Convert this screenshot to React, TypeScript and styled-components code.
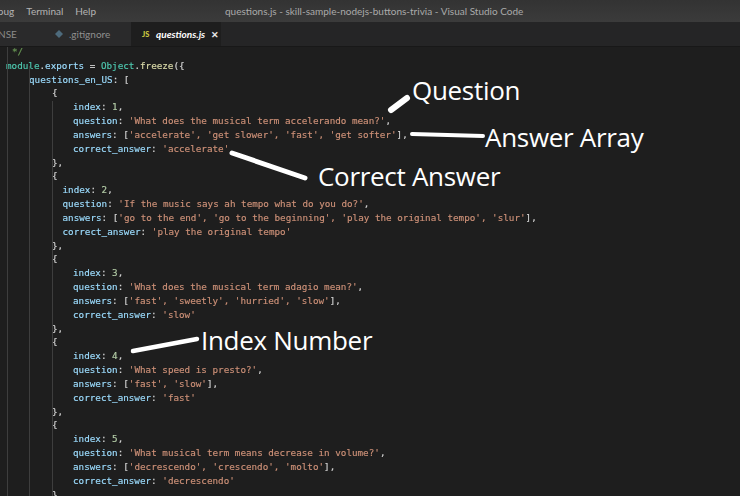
import React from "react";
import styled, { createGlobalStyle } from "styled-components";

const Global = createGlobalStyle`
  html, body { margin: 0; padding: 0; background: #1e1e1e; }
  #root { width: 740px; height: 496px; overflow: hidden; }
`;
const Window = styled.div`
  position: relative; width: 740px; height: 496px; overflow: hidden;
  background: #1e1e1e; display: flex; flex-direction: column;
  font-family: Lato, "Open Sans", "Liberation Sans", sans-serif;
`;
const TitleBar = styled.header`
  height: 22px; flex: none; display: flex; align-items: center;
  background: linear-gradient(#333333, #3b3b3b); color: #b4b4b4; font-size: 10px;
`;
const Menu = styled.nav`display: flex; gap: 12px; margin-left: -15px; width: 240px; flex: none;`;
const TitleText = styled.div`font-size: 10px; color: #aaaaaa; white-space: nowrap;`;
const TabBar = styled.div`height: 25px; flex: none; display: flex; background: #252526; border-bottom: 1px solid #181818; box-sizing: border-box;`;
const Tab = styled.div<{ $w: number; $active?: boolean }>`
  width: ${p => p.$w}px; flex: none; display: flex; align-items: center; gap: 5px; box-sizing: border-box;
  background: ${p => (p.$active ? "#1e1e1e" : "#2a2a2b")};
  color: ${p => (p.$active ? "#ffffff" : "#8f8f8f")};
  font-size: 10px; padding-left: ${p => (p.$active ? 11 : 36)}px;
`;
const ClippedTab = styled(Tab)`padding-left: 0; margin-left: -2px; color: #8a8a8a;`;
const TabName = styled.span<{ $italic?: boolean }>`
  font-style: ${p => (p.$italic ? "italic" : "normal")};
  font-weight: ${p => (p.$italic ? 700 : 400)};
`;
const JsIcon = styled.span`font-size: 7.5px; font-weight: 900; color: #cbcb41; width: 9px;`;
const Close = styled.span`font-size: 9px; font-weight: 900; color: #e6e6e6; margin-left: 1px;`;
const Editor = styled.main`
  position: relative; flex: 1; overflow: hidden;
  font-family: "DejaVu Sans Mono", "Liberation Mono", monospace; font-size: 9.28px; color: #d4d4d4;
  -webkit-text-stroke: 0.15px currentColor;
  filter: blur(0.25px);
`;
const Guide = styled.i<{ $x: number; $top: number; $h: number }>`
  position: absolute; left: ${p => p.$x}px; top: ${p => p.$top}px; height: ${p => p.$h}px; width: 1px; background: #3e3e3e;
`;
const Line = styled.div<{ $indent: number }>`
  height: 13.83px; line-height: 13.83px; white-space: pre; padding-left: ${p => p.$indent}px;
`;
const Code = styled.div`margin-top: -2px;`;
const Key = styled.span`color: #9cdcfe;`;
const Str = styled.span`color: #ce9178;`;
const Num = styled.span`color: #b5cea8;`;
const Type = styled.span`color: #4ec9b0;`;
const Fn = styled.span`color: #dcdcaa;`;
const Comment = styled.span`color: #6a9955;`;
const Callout = styled.div<{ $x: number; $y: number }>`
  position: absolute; left: ${p => p.$x}px; top: ${p => p.$y}px; color: #ffffff;
  font-family: "Open Sans", "Liberation Sans", sans-serif; font-size: 26px; line-height: 36px; white-space: nowrap;
  letter-spacing: -0.3px;
`;
const Strokes = styled.svg`position: absolute; left: 0; top: 0;`;

type Q = { n: number; indent: number; q: string; a: string; c: string };
const items: Q[] = [
  { n: 1, indent: 73, q: "What does the musical term accelerando mean?", a: "'accelerate', 'get slower', 'fast', 'get softer'", c: "accelerate" },
  { n: 2, indent: 62.5, q: "If the music says ah tempo what do you do?", a: "'go to the end', 'go to the beginning', 'play the original tempo', 'slur'", c: "play the original tempo" },
  { n: 3, indent: 73, q: "What does the musical term adagio mean?", a: "'fast', 'sweetly', 'hurried', 'slow'", c: "slow" },
  { n: 4, indent: 73, q: "What speed is presto?", a: "'fast', 'slow'", c: "fast" },
  { n: 5, indent: 73, q: "What musical term means decrease in volume?", a: "'decrescendo', 'crescendo', 'molto'", c: "decrescendo" },
];

const Block = ({ item }: { item: Q }) => (
  <>
    <Line $indent={52}>{"{"}</Line>
    <Line $indent={item.indent}><Key>index</Key>: <Num>{item.n}</Num>,</Line>
    <Line $indent={item.indent}><Key>question</Key>: <Str>'{item.q}'</Str>,</Line>
    <Line $indent={item.indent}><Key>answers</Key>: [<Str>{item.a}</Str>],</Line>
    <Line $indent={item.indent}><Key>correct_answer</Key>: <Str>'{item.c}'</Str></Line>
    <Line $indent={52}>{"},"}</Line>
  </>
);

export default function App() {
  return (
    <Window>
      <Global />
      <TitleBar>
        <Menu><span>Debug</span><span>Terminal</span><span>Help</span></Menu>
        <TitleText>questions.js - skill-sample-nodejs-buttons-trivia - Visual Studio Code</TitleText>
      </TitleBar>
      <TabBar>
        <ClippedTab $w={20}>NSE</ClippedTab>
        <Tab $w={113}>
          <svg width="10" height="10" viewBox="0 0 10 10"><path d="M5 1 9 5 5 9 1 5Z" fill="#4d6a7c" /></svg>
          <TabName>.gitignore</TabName>
        </Tab>
        <Tab $w={90} $active>
          <JsIcon>JS</JsIcon>
          <TabName $italic>questions.js</TabName>
          <Close>✕</Close>
        </Tab>
      </TabBar>
      <Editor>
        <Guide $x={7} $top={0} $h={449} />
        <Guide $x={29} $top={19} $h={430} />
        <Guide $x={52} $top={54} $h={395} />
        <Code>
          <Line $indent={12}><Comment>*/</Comment></Line>
          <Line $indent={6}><Type>module</Type>.<Key>exports</Key> = <Type>Object</Type>.<Fn>freeze</Fn>{"({"}</Line>
          <Line $indent={29}><Key>questions_en_US</Key>: [</Line>
          {items.map(i => <Block key={i.n} item={i} />)}
        </Code>
      </Editor>
      <Strokes width="740" height="496" viewBox="0 0 740 496" fill="none" stroke="#fff" strokeLinecap="round">
        <path d="M391 110 407 98" strokeWidth="6" />
        <path d="M412 134 483 136" strokeWidth="4" />
        <path d="M232 153 305 178" strokeWidth="5" />
        <path d="M133 351 197 339" strokeWidth="4.5" />
      </Strokes>
      <Callout $x={412} $y={72}>Question</Callout>
      <Callout $x={485} $y={119}>Answer Array</Callout>
      <Callout $x={318} $y={158}>Correct Answer</Callout>
      <Callout $x={201} $y={322}>Index Number</Callout>
    </Window>
  );
}
